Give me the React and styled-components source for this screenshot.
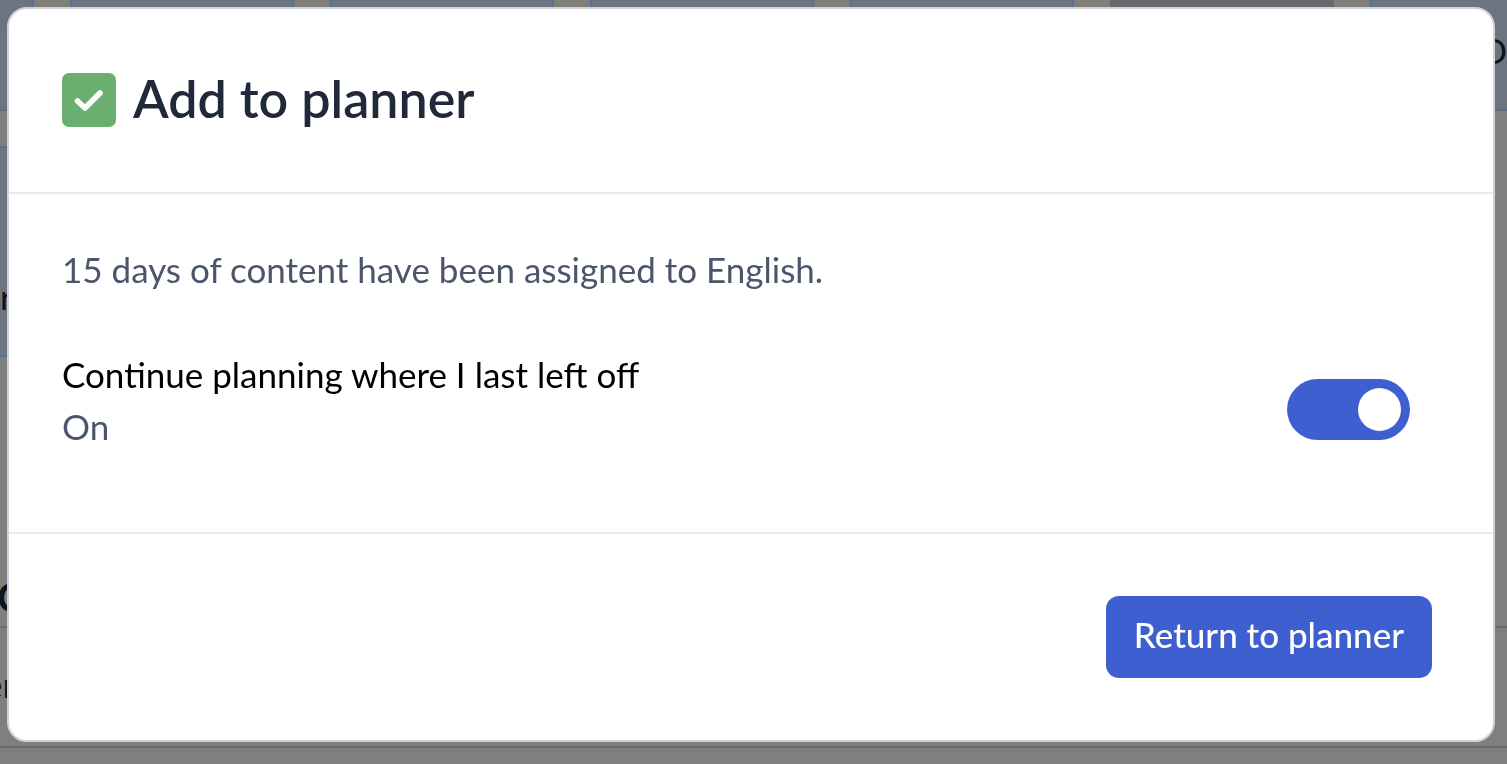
import { useState } from "react";
import styled, { createGlobalStyle } from "styled-components";

const GlobalStyle = createGlobalStyle`
* {
  box-sizing: border-box;
}
body {
  margin: 0;
  background: #7f7f7f;
  font-family: Lato, Carlito, "Liberation Sans", sans-serif;
  overflow: hidden;
}
`;
const Page = styled.div`
min-height: 100vh;
`;
const Planner = styled.main`
height: 100vh;
overflow: hidden;
color: #10141c;
font-size: 35px;
line-height: 52px;
`;
const Week = styled.div`
display: grid;
grid-template-columns: 34px repeat(5, 224px) 1fr;
column-gap: 36px;
background: #807e79;
`;
const Lesson = styled.div`
height: 111px;
padding-top: 24px;
background: ${props => props.$muted ? "#69696d" : "#6c747f"};
border: solid ${props => props.$muted ? "#69696d" : "#56708f"};
border-width: 0 2px 2px;
text-align: right;
&:first-child {
  border-left: 0;
}
&:last-child {
  border-right: 0;
}
`;
const NextLesson = styled.div`
width: 34px;
height: 211px;
margin-top: 35px;
padding-top: 122px;
background: #6c747f;
border: solid #56708f;
border-width: 2px 2px 2px 0;
`;
const SectionTitle = styled.div`
margin-top: 214px;
padding-bottom: 3px;
border-bottom: 2px solid #6b6b6e;
font-size: 40px;
font-weight: 700;
text-indent: -3px;
`;
const SectionRow = styled.div`
height: 120px;
padding-top: 30px;
border-bottom: 2px solid #6b6b6e;
text-indent: -16px;
`;
const Overlay = styled.div`
position: fixed;
inset: 0;
display: flex;
padding: 7px 12px 22px 7px;
`;
const Modal = styled.section`
flex: 1;
display: flex;
flex-direction: column;
background: #fff;
border: 2px solid #cfd1dd;
border-radius: 20px;
overflow: hidden;
`;
const Header = styled.header`
display: flex;
align-items: center;
gap: 17px;
padding: 52px 53px 57px;
border-bottom: 2px solid #e9eaee;
`;
const CheckIcon = styled.svg`
width: 54px;
height: 54px;
margin-top: 4px;
`;
const Title = styled.h1`
margin: 0;
color: #20283a;
font-size: 52px;
font-weight: 600;
line-height: 74px;
`;
const Body = styled.div`
flex: 1;
padding: 49px 53px;
`;
const Message = styled.p`
margin: 0 0 53px;
color: #4b556b;
font-size: 35px;
line-height: 52px;
`;
const Setting = styled.div`
display: flex;
align-items: center;
justify-content: space-between;
padding-right: 30px;
font-size: 35px;
line-height: 52px;
`;
const SettingLabel = styled.label`
display: block;
color: #000;
`;
const SettingState = styled.div`
color: #4b556b;
`;
const Toggle = styled.input`
appearance: none;
display: flex;
align-items: center;
width: 123px;
height: 61px;
margin: 18px 0 0;
padding: 9px;
border-radius: 31px;
background: #9aa0ae;
cursor: pointer;
&::before {
  content: "";
  width: 43px;
  height: 43px;
  border-radius: 50%;
  background: #fff;
}
&:checked {
  justify-content: flex-end;
  background: #3e5fcf;
}
`;
const Footer = styled.footer`
display: flex;
justify-content: flex-end;
padding: 62px 61px;
border-top: 2px solid #e9eaee;
`;
const Button = styled.button`
padding: 12px 28px 18px;
border: 0;
border-radius: 13px;
background: #3e5fcf;
color: #fff;
font-family: inherit;
font-size: 35px;
font-weight: 500;
line-height: 52px;
cursor: pointer;
`;

const App = () => {
  const [on, setOn] = useState(true);
  return (
    <Page>
      <GlobalStyle />
      <Planner aria-hidden="true">
        <Week>
          <Lesson />
          <Lesson />
          <Lesson />
          <Lesson />
          <Lesson />
          <Lesson $muted />
          <Lesson>D</Lesson>
        </Week>
        <NextLesson>r</NextLesson>
        <SectionTitle>C</SectionTitle>
        <SectionRow>er</SectionRow>
      </Planner>
      <Overlay>
        <Modal role="dialog" aria-labelledby="dialog-title">
          <Header>
            <CheckIcon viewBox="0 0 54 54" aria-hidden="true">
              <rect width="54" height="54" rx="7" fill="#6aaf70" />
              <path d="M15.5 28l7.5 7L38 20" fill="none" stroke="#fff" strokeWidth="5.5" strokeLinecap="round" strokeLinejoin="round" />
            </CheckIcon>
            <Title id="dialog-title">Add to planner</Title>
          </Header>
          <Body>
            <Message>15 days of content have been assigned to English.</Message>
            <Setting>
              <div>
                <SettingLabel htmlFor="continue">Continue planning where I last left off</SettingLabel>
                <SettingState>{on ? "On" : "Off"}</SettingState>
              </div>
              <Toggle id="continue" type="checkbox" role="switch" checked={on} onChange={() => setOn(!on)} />
            </Setting>
          </Body>
          <Footer>
            <Button type="button">Return to planner</Button>
          </Footer>
        </Modal>
      </Overlay>
    </Page>
  )
}

export default App
